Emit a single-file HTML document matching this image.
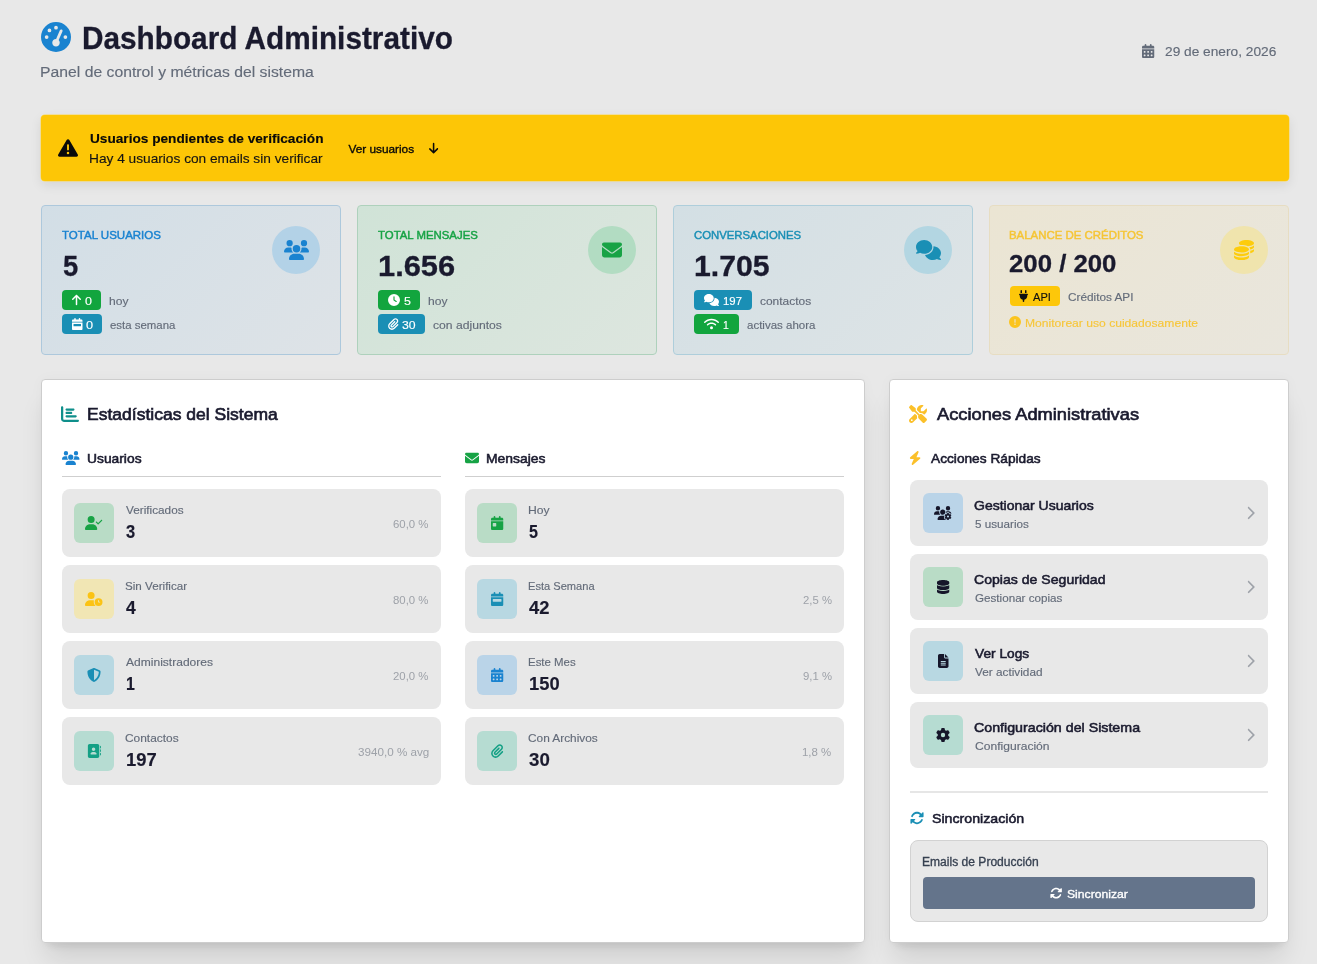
<!DOCTYPE html>
<html lang="es">
<head>
<meta charset="utf-8">
<title>Dashboard Administrativo</title>
<style>
html,body{margin:0;padding:0}
body{width:1317px;height:964px;overflow:hidden;background:#e8e8e8;font-family:"Liberation Sans", Arial, sans-serif;position:relative}
main,header,section,article,aside{display:block;margin:0;padding:0}
main div{position:absolute;box-sizing:border-box}
.t{position:absolute;display:block;white-space:nowrap;line-height:1;margin:0;padding:0;font-weight:400;font-style:normal;text-decoration:none;transform-origin:left top}
svg{position:absolute;overflow:visible}
main div.tx{left:0;top:0;width:1317px;height:964px;will-change:transform}
</style>
</head>
<body>
<main>
<header class="page-header">
<svg style="left:40.80px;top:21.60px" width="30.00" height="30.00" viewBox="0 0 512 512"><path fill="#1a83d0" fill-rule="evenodd" d="M0 256a256 256 0 1 1 512 0A256 256 0 1 1 0 256zM288 96a32 32 0 1 0 -64 0 32 32 0 1 0 64 0zM256 416c35.300 0 64-28.700 64-64c0-17.400-6.900-33.100-18.100-44.600L366 161.700c5.300-12.100-.2-26.300-12.300-31.600s-26.300 .2-31.600 12.300L257.900 288c-.6 0-1.300 0-1.900 0c-35.300 0-64 28.700-64 64s28.700 64 64 64zM176 144a32 32 0 1 0 -64 0 32 32 0 1 0 64 0zM96 288a32 32 0 1 0 0-64 32 32 0 1 0 0 64zm352-32a32 32 0 1 0 -64 0 32 32 0 1 0 64 0z"/></svg>
<svg style="left:1141.67px;top:44.00px" width="12.25" height="14.00" viewBox="0 0 448 512"><path fill="#636b79" fill-rule="evenodd" d="M128 0c17.700 0 32 14.300 32 32V64H288V32c0-17.700 14.300-32 32-32s32 14.300 32 32V64h48c26.500 0 48 21.500 48 48v48H0V112C0 85.500 21.500 64 48 64H96V32c0-17.700 14.300-32 32-32zM0 192H448V464c0 26.500-21.500 48-48 48H48c-26.500 0-48-21.500-48-48V192zm64 80v32c0 8.800 7.200 16 16 16h32c8.800 0 16-7.200 16-16V272c0-8.800-7.200-16-16-16H80c-8.800 0-16 7.200-16 16zm128 0v32c0 8.800 7.200 16 16 16h32c8.800 0 16-7.200 16-16V272c0-8.800-7.200-16-16-16H208c-8.800 0-16 7.200-16 16zm144-16c-8.800 0-16 7.200-16 16v32c0 8.800 7.200 16 16 16h32c8.800 0 16-7.200 16-16V272c0-8.800-7.200-16-16-16H336zM64 400v32c0 8.800 7.200 16 16 16h32c8.800 0 16-7.200 16-16V400c0-8.800-7.200-16-16-16H80c-8.800 0-16 7.200-16 16zm144-16c-8.800 0-16 7.200-16 16v32c0 8.800 7.200 16 16 16h32c8.800 0 16-7.200 16-16V400c0-8.800-7.200-16-16-16H208zm112 16v32c0 8.800 7.200 16 16 16h32c8.800 0 16-7.200 16-16V400c0-8.800-7.200-16-16-16H336c-8.800 0-16 7.200-16 16z"/></svg>
<div class="tx">
<h1 class="t" style="left:82.35px;top:23px;color:#1a1a2e;font-size:30.5px;font-weight:700;-webkit-text-stroke:0.3px;transform:scaleX(0.9755);">Dashboard Administrativo</h1>
<p class="t" style="left:40.10px;top:64px;color:#636b79;font-size:15.2px;-webkit-text-stroke:0.15px;transform:scaleX(1.0365);">Panel de control y métricas del sistema</p>
<time class="t" style="left:1165.49px;top:45px;color:#636b79;font-size:13.51px;-webkit-text-stroke:0.15px;transform:scaleX(1.0157);">29 de enero, 2026</time>
</div>
</header>
<section class="alert-warning">
<div style="left:41px;top:115px;width:1248px;height:66px;background:#fdc606;border-radius:4px;box-shadow:0 0 0 .5px #fbd95a,0 4px 12px rgba(0,0,0,.09)"></div>
<svg style="left:57.75px;top:137.50px" width="20.00" height="20.00" viewBox="0 0 512 512"><path fill="#0a0a0a" fill-rule="evenodd" d="M256 32c14.200 0 27.300 7.500 34.500 19.800l216 368c7.300 12.400 7.300 27.700 .2 40.100S486.300 480 472 480H40c-14.300 0-27.600-7.700-34.700-20.100s-7-27.800 .2-40.100l216-368C228.700 39.500 241.800 32 256 32zm0 128c-13.300 0-24 10.700-24 24V296c0 13.300 10.700 24 24 24s24-10.700 24-24V184c0-13.300-10.700-24-24-24zm32 224a32 32 0 1 0 -64 0 32 32 0 1 0 64 0z"/></svg>
<svg style="left:428.51px;top:141.53px" width="9.19" height="12.25" viewBox="0 0 384 512"><path fill="#0a0a0a" fill-rule="evenodd" d="M169.400 470.600c12.500 12.500 32.800 12.500 45.300 0l160-160c12.500-12.500 12.500-32.800 0-45.300s-32.800-12.500-45.300 0L224 370.800V64c0-17.700-14.300-32-32-32s-32 14.300-32 32V370.800L54.600 265.400c-12.500-12.500-32.800-12.500-45.300 0s-12.500 32.800 0 45.300l160 160z"/></svg>
<div class="tx">
<strong class="t" style="left:89.54px;top:132px;color:#0a0a0a;font-size:13.51px;font-weight:700;-webkit-text-stroke:0.15px;transform:scaleX(1.0105);">Usuarios pendientes de verificación</strong>
<span class="t" style="left:89.29px;top:152px;color:#151515;font-size:13.51px;-webkit-text-stroke:0.15px;transform:scaleX(1.0142);">Hay 4 usuarios con emails sin verificar</span>
<a class="t" style="left:348.45px;top:144px;color:#0a0a0a;font-size:11.82px;-webkit-text-stroke:0.35px;">Ver usuarios</a>
</div>
</section>
<article class="stat-card users">
<div style="left:41px;top:205px;width:300px;height:150px;background:linear-gradient(135deg,#d2dee6,#dee3e7);border:1px solid #adc8dc;border-radius:4px"></div>
<div style="left:272px;top:226px;width:48px;height:48px;background:#b3d2e7;border-radius:50%"></div>
<div style="left:61.9px;top:290px;width:39.1px;height:20px;background:#12a53e;border-radius:4px"></div>
<div style="left:61.9px;top:314px;width:40.0px;height:20px;background:#1a8fb5;border-radius:4px"></div>
<svg style="left:283.50px;top:240.00px" width="25.00" height="20.00" viewBox="0 0 640 512"><path fill="#1a83d0" fill-rule="evenodd" d="M144 0a80 80 0 1 1 0 160A80 80 0 1 1 144 0zM512 0a80 80 0 1 1 0 160A80 80 0 1 1 512 0zM0 298.700C0 239.800 47.800 192 106.700 192h42.700c15.900 0 31 3.500 44.600 9.700c-1.300 7.200-1.900 14.700-1.900 22.300c0 38.200 16.800 72.500 43.300 96c-.2 0-.4 0-.7 0H21.300C9.600 320 0 310.400 0 298.700zM405.300 320c-.2 0-.4 0-.7 0c26.600-23.500 43.300-57.800 43.300-96c0-7.600-.7-15-1.900-22.300c13.600-6.300 28.700-9.700 44.600-9.700h42.700C592.200 192 640 239.800 640 298.700c0 11.800-9.600 21.300-21.300 21.300H405.300zM224 224a96 96 0 1 1 192 0 96 96 0 1 1 -192 0zM128 485.300C128 411.700 187.700 352 261.300 352H378.700C452.300 352 512 411.700 512 485.300c0 14.700-11.900 26.700-26.700 26.700H154.700c-14.700 0-26.700-11.900-26.700-26.700z"/></svg>
<svg style="left:71.50px;top:293.60px" width="9.00" height="12.00" viewBox="0 0 384 512"><path fill="#ffffff" fill-rule="evenodd" d="M214.600 41.400c-12.500-12.500-32.800-12.500-45.300 0l-160 160c-12.500 12.500-12.500 32.800 0 45.300s32.800 12.500 45.300 0L160 141.200V448c0 17.700 14.300 32 32 32s32-14.300 32-32V141.200L329.400 246.600c12.500 12.500 32.800 12.500 45.300 0s12.500-32.800 0-45.300l-160-160z"/></svg>
<svg style="left:71.50px;top:317.60px" width="10.50" height="12.00" viewBox="0 0 448 512"><path fill="#ffffff" fill-rule="evenodd" d="M128 0c17.700 0 32 14.300 32 32V64H288V32c0-17.700 14.300-32 32-32s32 14.300 32 32V64h48c26.500 0 48 21.500 48 48v48H0V112C0 85.500 21.500 64 48 64H96V32c0-17.700 14.300-32 32-32zM0 192H448V464c0 26.500-21.500 48-48 48H48c-26.500 0-48-21.500-48-48V192zm80 64c-8.800 0-16 7.200-16 16v64c0 8.800 7.200 16 16 16H368c8.800 0 16-7.200 16-16V272c0-8.800-7.200-16-16-16H80z"/></svg>
<div class="tx">
<span class="t" style="left:62.10px;top:230px;color:#1a83d0;font-size:11.58px;-webkit-text-stroke:0.45px;transform:scaleX(0.9945);">TOTAL USUARIOS</span>
<strong class="t" style="left:62.50px;top:251px;color:#1a1a2e;font-size:29.3px;font-weight:700;-webkit-text-stroke:0.3px;transform:scaleX(0.9333);">5</strong>
<span class="t" style="left:84.73px;top:296px;color:#ffffff;font-size:11.58px;-webkit-text-stroke:0.15px;transform:scaleX(1.0783);">0</span>
<span class="t" style="left:109.02px;top:296px;color:#636b79;font-size:11.58px;-webkit-text-stroke:0.15px;transform:scaleX(1.0444);">hoy</span>
<span class="t" style="left:85.83px;top:320px;color:#ffffff;font-size:11.58px;-webkit-text-stroke:0.15px;transform:scaleX(1.0957);">0</span>
<span class="t" style="left:110.21px;top:320px;color:#636b79;font-size:11.58px;-webkit-text-stroke:0.15px;transform:scaleX(0.9864);">esta semana</span>
</div>
</article>
<article class="stat-card messages">
<div style="left:357px;top:205px;width:300px;height:150px;background:linear-gradient(135deg,#d0e3d7,#dde6df);border:1px solid #aed1bc;border-radius:4px"></div>
<div style="left:588px;top:226px;width:48px;height:48px;background:#b2dcc2;border-radius:50%"></div>
<div style="left:377.9px;top:290px;width:42.0px;height:20px;background:#12a53e;border-radius:4px"></div>
<div style="left:377.9px;top:314px;width:46.9px;height:20px;background:#1a8fb5;border-radius:4px"></div>
<svg style="left:602.00px;top:240.00px" width="20.00" height="20.00" viewBox="0 0 512 512"><path fill="#17a345" fill-rule="evenodd" d="M48 64C21.500 64 0 85.500 0 112c0 15.100 7.100 29.300 19.200 38.400L236.800 313.600c11.400 8.500 27 8.500 38.400 0L492.800 150.400c12.100-9.100 19.200-23.300 19.200-38.400c0-26.500-21.500-48-48-48H48zM0 176V384c0 35.300 28.700 64 64 64H448c35.300 0 64-28.700 64-64V176L294.400 339.200c-22.800 17.100-54 17.100-76.800 0L0 176z"/></svg>
<svg style="left:387.50px;top:293.60px" width="12.00" height="12.00" viewBox="0 0 512 512"><path fill="#ffffff" fill-rule="evenodd" d="M256 0a256 256 0 1 1 0 512A256 256 0 1 1 256 0zM232 120V256c0 8 4 15.500 10.700 20l96 64c11 7.400 25.900 4.400 33.300-6.700s4.400-25.900-6.700-33.300L280 243.200V120c0-13.300-10.700-24-24-24s-24 10.700-24 24z"/></svg>
<svg style="left:387.50px;top:317.60px" width="10.50" height="12.00" viewBox="0 0 448 512"><path fill="#ffffff" fill-rule="evenodd" d="M364.200 83.800c-24.400-24.400-64-24.400-88.400 0l-184 184c-42.100 42.100-42.100 110.300 0 152.400s110.300 42.100 152.400 0l152-152c10.900-10.900 28.700-10.900 39.600 0s10.900 28.700 0 39.600l-152 152c-64 64-167.600 64-231.600 0s-64-167.600 0-231.600l184-184c46.300-46.300 121.300-46.300 167.600 0s46.300 121.300 0 167.600l-176 176c-28.600 28.600-75 28.600-103.600 0s-28.600-75 0-103.600l144-144c10.900-10.900 28.700-10.900 39.600 0s10.900 28.700 0 39.600l-144 144c-6.700 6.700-6.700 17.700 0 24.400s17.700 6.700 24.400 0l176-176c24.400-24.400 24.400-64 0-88.400z"/></svg>
<div class="tx">
<span class="t" style="left:378.10px;top:230px;color:#17a345;font-size:11.58px;-webkit-text-stroke:0.45px;transform:scaleX(0.9847);">TOTAL MENSAJES</span>
<strong class="t" style="left:378.16px;top:251px;color:#1a1a2e;font-size:29.3px;font-weight:700;-webkit-text-stroke:0.3px;transform:scaleX(1.0516);">1.656</strong>
<span class="t" style="left:403.56px;top:296px;color:#ffffff;font-size:11.58px;-webkit-text-stroke:0.15px;transform:scaleX(1.0727);">5</span>
<span class="t" style="left:427.72px;top:296px;color:#636b79;font-size:11.58px;-webkit-text-stroke:0.15px;transform:scaleX(1.0444);">hoy</span>
<span class="t" style="left:401.77px;top:320px;color:#ffffff;font-size:11.58px;-webkit-text-stroke:0.15px;transform:scaleX(1.0583);">30</span>
<span class="t" style="left:432.68px;top:320px;color:#636b79;font-size:11.58px;-webkit-text-stroke:0.15px;transform:scaleX(1.0486);">con adjuntos</span>
</div>
</article>
<article class="stat-card conversations">
<div style="left:673px;top:205px;width:300px;height:150px;background:linear-gradient(135deg,#d3dfe4,#dee4e6);border:1px solid #aecedb;border-radius:4px"></div>
<div style="left:904px;top:226px;width:48px;height:48px;background:#b3d6e2;border-radius:50%"></div>
<div style="left:693.9px;top:290px;width:58.1px;height:20px;background:#1a8fb5;border-radius:4px"></div>
<div style="left:693.9px;top:314px;width:45.2px;height:20px;background:#12a53e;border-radius:4px"></div>
<svg style="left:915.50px;top:240.00px" width="25.00" height="20.00" viewBox="0 0 640 512"><path fill="#1a8fb5" fill-rule="evenodd" d="M208 352c114.900 0 208-78.800 208-176S322.900 0 208 0S0 78.800 0 176c0 38.600 14.700 74.300 39.600 103.400c-3.500 9.400-8.700 17.700-14.200 24.700c-4.800 6.200-9.700 11-13.300 14.300c-1.800 1.600-3.300 2.900-4.300 3.700c-.5 .4-.9 .7-1.100 .8l-.2 .2 0 0 0 0C1 327.200-1.400 334.400 .8 340.900S9.100 352 16 352c21.800 0 43.800-5.600 62.100-12.500c9.200-3.500 17.800-7.400 25.300-11.400C134.100 343.300 169.800 352 208 352zM448 176c0 112.300-99.100 196.900-216.500 207C255.800 457.400 336.400 512 432 512c38.200 0 73.900-8.700 104.700-23.900c7.500 4 16 7.900 25.200 11.400c18.300 6.900 40.300 12.500 62.100 12.500c6.900 0 13.100-4.500 15.200-11.100c2.100-6.600-.2-13.800-5.800-17.900l0 0 0 0-.2-.2c-.2-.2-.6-.4-1.100-.8c-1-.8-2.500-2-4.300-3.700c-3.600-3.300-8.500-8.100-13.300-14.300c-5.500-7-10.700-15.400-14.200-24.700c24.900-29 39.600-64.700 39.600-103.400c0-92.800-84.900-168.900-192.600-175.500c.4 5.100 .6 10.300 .6 15.500z"/></svg>
<svg style="left:703.50px;top:293.60px" width="15.00" height="12.00" viewBox="0 0 640 512"><path fill="#ffffff" fill-rule="evenodd" d="M208 352c114.900 0 208-78.800 208-176S322.900 0 208 0S0 78.800 0 176c0 38.600 14.700 74.300 39.600 103.400c-3.500 9.400-8.700 17.700-14.200 24.700c-4.800 6.200-9.700 11-13.300 14.300c-1.800 1.600-3.300 2.900-4.300 3.700c-.5 .4-.9 .7-1.100 .8l-.2 .2 0 0 0 0C1 327.200-1.400 334.400 .8 340.900S9.100 352 16 352c21.800 0 43.800-5.600 62.100-12.500c9.200-3.500 17.800-7.400 25.300-11.400C134.100 343.300 169.800 352 208 352zM448 176c0 112.300-99.100 196.900-216.500 207C255.800 457.400 336.400 512 432 512c38.200 0 73.900-8.700 104.700-23.900c7.500 4 16 7.900 25.200 11.400c18.300 6.900 40.300 12.500 62.100 12.500c6.900 0 13.100-4.500 15.200-11.100c2.100-6.600-.2-13.800-5.800-17.900l0 0 0 0-.2-.2c-.2-.2-.6-.4-1.100-.8c-1-.8-2.500-2-4.300-3.700c-3.600-3.300-8.500-8.100-13.300-14.300c-5.500-7-10.700-15.400-14.200-24.700c24.900-29 39.600-64.700 39.600-103.400c0-92.800-84.900-168.900-192.600-175.500c.4 5.100 .6 10.300 .6 15.500z"/></svg>
<svg style="left:703.50px;top:317.60px" width="15.00" height="12.00" viewBox="0 0 640 512"><path fill="#ffffff" fill-rule="evenodd" d="M54.200 202.900C123.200 136.700 216.800 96 320 96s196.800 40.700 265.800 106.900c12.800 12.200 33 11.800 45.200-.9s11.800-33-.9-45.200C549.700 79.500 440.400 32 320 32S90.300 79.500 9.800 156.700C-2.900 169-3.300 189.200 8.900 202s32.500 13.200 45.200 .9zM320 256c56.800 0 108.600 21.100 148.200 56c13.300 11.700 33.500 10.400 45.200-2.800s10.400-33.500-2.800-45.200C459.800 219.200 393 192 320 192s-139.800 27.200-190.500 72c-13.300 11.700-14.500 31.900-2.800 45.200s31.900 14.500 45.200 2.800c39.500-34.900 91.300-56 148.200-56zm64 160a64 64 0 1 0 -128 0 64 64 0 1 0 128 0z"/></svg>
<div class="tx">
<span class="t" style="left:693.86px;top:230px;color:#1a8fb5;font-size:11.58px;-webkit-text-stroke:0.45px;transform:scaleX(0.9793);">CONVERSACIONES</span>
<strong class="t" style="left:694.20px;top:251px;color:#1a1a2e;font-size:29.3px;font-weight:700;-webkit-text-stroke:0.3px;transform:scaleX(1.0310);">1.705</strong>
<span class="t" style="left:722.96px;top:296px;color:#ffffff;font-size:11.58px;-webkit-text-stroke:0.15px;transform:scaleX(0.9833);">197</span>
<span class="t" style="left:760.08px;top:296px;color:#636b79;font-size:11.58px;-webkit-text-stroke:0.15px;transform:scaleX(1.0318);">contactos</span>
<span class="t" style="left:723.06px;top:320px;color:#ffffff;font-size:11.58px;-webkit-text-stroke:0.15px;transform:scaleX(0.9000);">1</span>
<span class="t" style="left:746.90px;top:320px;color:#636b79;font-size:11.58px;-webkit-text-stroke:0.15px;transform:scaleX(0.9942);">activas ahora</span>
</div>
</article>
<article class="stat-card credits">
<div style="left:989px;top:205px;width:300px;height:150px;background:linear-gradient(135deg,#ebe5d3,#e9e6dd);border:1px solid #e7ddc2;border-radius:4px"></div>
<div style="left:1220px;top:226px;width:48px;height:48px;background:#f0e4ad;border-radius:50%"></div>
<div style="left:1009.8px;top:286px;width:50.2px;height:20px;background:#fdc70a;border-radius:4px"></div>
<svg style="left:1234.00px;top:240.00px" width="20.00" height="20.00" viewBox="0 0 512 512"><path fill="#fdcc0d" fill-rule="evenodd" d="M512 80c0 18-14.300 34.600-38.400 48c-29.100 16.100-72.500 27.500-122.300 30.900c-3.700-1.800-7.400-3.500-11.300-5C300.600 137.400 248.200 128 192 128c-8.300 0-16.400 .2-24.500 .6l-1.100-.6C142.300 114.600 128 98 128 80c0-44.200 86-80 192-80S512 35.800 512 80zM160.700 161.100c10.200-.7 20.700-1.100 31.300-1.100c62.200 0 117.400 12.300 152.500 31.400C369.300 204.900 384 221.700 384 240c0 4-.7 7.900-2.100 11.700c-4.600 13.200-17 25.300-35 35.500c0 0 0 0 0 0c-.1 .1-.3 .1-.4 .2l0 0 0 0c-.3 .2-.6 .3-.9 .5c-35 19.400-90.800 32-153.600 32c-59.600 0-112.900-11.300-148.200-29.100c-1.900-.9-3.700-1.900-5.500-2.900C14.300 274.600 0 258 0 240c0-34.800 53.400-64.500 128-75.400c10.500-1.500 21.400-2.700 32.700-3.500zM416 240c0-21.900-10.600-39.900-24.100-53.400c28.300-4.400 54.200-11.400 76.200-20.500c16.300-6.800 31.500-15.200 43.900-25.500V176c0 19.300-16.500 37.100-43.800 50.900c-14.600 7.400-32.400 13.700-52.400 18.500c.1-1.800 .2-3.500 .2-5.300zm-32 96c0 18-14.300 34.600-38.400 48c-1.800 1-3.600 1.900-5.500 2.900C304.900 404.700 251.600 416 192 416c-62.800 0-118.600-12.600-153.600-32C14.300 370.600 0 354 0 336V300.600c12.500 10.300 27.600 18.700 43.900 25.500C83.400 342.600 135.800 352 192 352s108.600-9.400 148.100-25.900c7.800-3.200 15.300-6.900 22.400-10.900c6.100-3.400 11.800-7.200 17.200-11.200c1.500-1.100 2.900-2.300 4.300-3.400V304v5.700V336zm32 0V304 278.100c19-4.200 36.500-9.500 52.100-16c16.300-6.800 31.500-15.200 43.900-25.500V272c0 10.500-5 21-14.900 30.900c-16.300 16.300-45 29.700-81.300 38.400c.1-1.700 .2-3.500 .2-5.300zM192 448c56.200 0 108.600-9.400 148.100-25.900c16.300-6.800 31.500-15.200 43.900-25.500V432c0 44.200-86 80-192 80S0 476.200 0 432V396.600c12.500 10.300 27.600 18.700 43.900 25.500C83.400 438.600 135.800 448 192 448z"/></svg>
<svg style="left:1019.40px;top:289.60px" width="9.00" height="12.00" viewBox="0 0 384 512"><path fill="#111111" fill-rule="evenodd" d="M96 0C78.300 0 64 14.300 64 32v96h64V32c0-17.700-14.300-32-32-32zM288 0c-17.700 0-32 14.300-32 32v96h64V32c0-17.700-14.300-32-32-32zM32 160c-17.700 0-32 14.300-32 32s14.300 32 32 32v32c0 77.400 55 142 128 156.800V480c0 17.700 14.300 32 32 32s32-14.300 32-32V412.800C297 398 352 333.400 352 256V224c17.700 0 32-14.300 32-32s-14.300-32-32-32H32z"/></svg>
<svg style="left:1009.15px;top:316.25px" width="12.00" height="12.00" viewBox="0 0 512 512"><path fill="#fbc41d" fill-rule="evenodd" d="M256 512A256 256 0 1 0 256 0a256 256 0 1 0 0 512zm0-384c13.300 0 24 10.700 24 24V264c0 13.300-10.700 24-24 24s-24-10.700-24-24V152c0-13.300 10.700-24 24-24zM224 352a32 32 0 1 1 64 0 32 32 0 1 1 -64 0z"/></svg>
<div class="tx">
<span class="t" style="left:1009.06px;top:230px;color:#f5c535;font-size:11.58px;-webkit-text-stroke:0.45px;transform:scaleX(0.9871);">BALANCE DE CRÉDITOS</span>
<strong class="t" style="left:1009.39px;top:252px;color:#1a1a2e;font-size:23.8px;font-weight:700;-webkit-text-stroke:0.3px;transform:scaleX(1.0824);">200 / 200</strong>
<span class="t" style="left:1033.20px;top:292px;color:#111111;font-size:11.58px;-webkit-text-stroke:0.15px;transform:scaleX(0.9577);">API</span>
<span class="t" style="left:1068.19px;top:292px;color:#636b79;font-size:11.58px;-webkit-text-stroke:0.15px;transform:scaleX(1.0175);">Créditos API</span>
<span class="t" style="left:1024.82px;top:318px;color:#f6c63a;font-size:11.58px;-webkit-text-stroke:0.15px;transform:scaleX(1.0460);">Monitorear uso cuidadosamente</span>
</div>
</article>
<section class="panel system-stats">
<div style="left:41px;top:379px;width:824px;height:564px;background:#fff;border:1px solid #cdcdcd;border-radius:4px;box-shadow:0 20px 25px -5px rgba(0,0,0,.11),0 8px 10px -6px rgba(0,0,0,.10),0 0 14px rgba(0,0,0,.03)"></div>
<div style="left:62px;top:476px;width:379px;height:1px;background:#cfcfcf"></div>
<div style="left:465px;top:476px;width:379px;height:1px;background:#cfcfcf"></div>
<div style="left:62px;top:489px;width:379px;height:68px;background:#e8e8e8;border-radius:8px"></div>
<div style="left:74px;top:503px;width:40px;height:40px;background:#b9dcc6;border-radius:6px"></div>
<div style="left:62px;top:565px;width:379px;height:68px;background:#e8e8e8;border-radius:8px"></div>
<div style="left:74px;top:579px;width:40px;height:40px;background:#f1e6b4;border-radius:6px"></div>
<div style="left:62px;top:641px;width:379px;height:68px;background:#e8e8e8;border-radius:8px"></div>
<div style="left:74px;top:655px;width:40px;height:40px;background:#b8d8e2;border-radius:6px"></div>
<div style="left:62px;top:717px;width:379px;height:68px;background:#e8e8e8;border-radius:8px"></div>
<div style="left:74px;top:731px;width:40px;height:40px;background:#b6dcd2;border-radius:6px"></div>
<div style="left:465px;top:489px;width:379px;height:68px;background:#e8e8e8;border-radius:8px"></div>
<div style="left:477px;top:503px;width:40px;height:40px;background:#b9dcc6;border-radius:6px"></div>
<div style="left:465px;top:565px;width:379px;height:68px;background:#e8e8e8;border-radius:8px"></div>
<div style="left:477px;top:579px;width:40px;height:40px;background:#b8d8e2;border-radius:6px"></div>
<div style="left:465px;top:641px;width:379px;height:68px;background:#e8e8e8;border-radius:8px"></div>
<div style="left:477px;top:655px;width:40px;height:40px;background:#bad4e8;border-radius:6px"></div>
<div style="left:465px;top:717px;width:379px;height:68px;background:#e8e8e8;border-radius:8px"></div>
<div style="left:477px;top:731px;width:40px;height:40px;background:#b6dcd2;border-radius:6px"></div>
<svg style="left:61.35px;top:404.95px" width="18.00" height="18.00" viewBox="0 0 512 512"><path fill="#0f8f8b" fill-rule="evenodd" d="M32 32c17.700 0 32 14.300 32 32V400c0 8.800 7.200 16 16 16H480c17.700 0 32 14.300 32 32s-14.300 32-32 32H80c-44.200 0-80-35.800-80-80V64C0 46.300 14.300 32 32 32zm96 96c0-17.700 14.300-32 32-32l192 0c17.700 0 32 14.300 32 32s-14.300 32-32 32l-192 0c-17.700 0-32-14.300-32-32zm32 64H288c17.700 0 32 14.300 32 32s-14.300 32-32 32H160c-17.700 0-32-14.300-32-32s14.300-32 32-32zm0 96H416c17.700 0 32 14.300 32 32s-14.300 32-32 32H160c-17.700 0-32-14.300-32-32s14.300-32 32-32z"/></svg>
<svg style="left:61.60px;top:450.90px" width="17.50" height="14.00" viewBox="0 0 640 512"><path fill="#1a83d0" fill-rule="evenodd" d="M144 0a80 80 0 1 1 0 160A80 80 0 1 1 144 0zM512 0a80 80 0 1 1 0 160A80 80 0 1 1 512 0zM0 298.700C0 239.800 47.800 192 106.700 192h42.700c15.900 0 31 3.500 44.600 9.700c-1.300 7.200-1.900 14.700-1.900 22.300c0 38.200 16.800 72.500 43.300 96c-.2 0-.4 0-.7 0H21.300C9.600 320 0 310.400 0 298.700zM405.300 320c-.2 0-.4 0-.7 0c26.600-23.500 43.300-57.800 43.300-96c0-7.600-.7-15-1.900-22.300c13.600-6.300 28.700-9.700 44.600-9.700h42.700C592.200 192 640 239.800 640 298.700c0 11.800-9.600 21.300-21.300 21.300H405.300zM224 224a96 96 0 1 1 192 0 96 96 0 1 1 -192 0zM128 485.300C128 411.700 187.700 352 261.300 352H378.700C452.300 352 512 411.700 512 485.300c0 14.700-11.900 26.700-26.700 26.700H154.700c-14.700 0-26.700-11.900-26.700-26.700z"/></svg>
<svg style="left:464.55px;top:451.05px" width="14.00" height="14.00" viewBox="0 0 512 512"><path fill="#17a345" fill-rule="evenodd" d="M48 64C21.500 64 0 85.500 0 112c0 15.100 7.100 29.300 19.200 38.400L236.800 313.600c11.400 8.500 27 8.500 38.400 0L492.800 150.400c12.100-9.100 19.200-23.300 19.200-38.400c0-26.500-21.500-48-48-48H48zM0 176V384c0 35.300 28.700 64 64 64H448c35.300 0 64-28.700 64-64V176L294.400 339.200c-22.800 17.100-54 17.100-76.800 0L0 176z"/></svg>
<svg style="left:85.25px;top:516.00px" width="17.50" height="14.00" viewBox="0 0 640 512"><path fill="#17a345" fill-rule="evenodd" d="M96 128a128 128 0 1 1 256 0A128 128 0 1 1 96 128zM0 482.300C0 383.800 79.800 304 178.300 304h91.400C368.200 304 448 383.800 448 482.300c0 16.400-13.300 29.700-29.700 29.700H29.700C13.300 512 0 498.700 0 482.300zM625 177L497 305c-9.400 9.400-24.600 9.400-33.900 0l-64-64c-9.400-9.400-9.400-24.600 0-33.900s24.600-9.400 33.900 0l47 47L591 143c9.400-9.400 24.600-9.400 33.900 0s9.400 24.600 0 33.900z"/></svg>
<svg style="left:85.25px;top:592.00px" width="17.50" height="14.00" viewBox="0 0 640 512"><path fill="#fbc314" fill-rule="evenodd" d="M224 0a128 128 0 1 1 0 256A128 128 0 1 1 224 0zM178.300 304h91.400c20.600 0 40.400 3.500 58.800 9.900C323 331 320 349.100 320 368c0 59.500 29.500 112.100 74.800 144H29.700C13.300 512 0 498.700 0 482.300C0 383.800 79.800 304 178.300 304zM352 368a144 144 0 1 1 288 0 144 144 0 1 1 -288 0zm144-80c-8.800 0-16 7.200-16 16v64c0 8.800 7.200 16 16 16h48c8.800 0 16-7.200 16-16s-7.200-16-16-16H512V304c0-8.800-7.200-16-16-16z"/></svg>
<svg style="left:87.00px;top:668.00px" width="14.00" height="14.00" viewBox="0 0 512 512"><path fill="#1a8fb5" fill-rule="evenodd" d="M256 0c4.600 0 9.200 1 13.400 2.900L457.700 82.800c22 9.300 38.400 31 38.300 57.200c-.5 99.200-41.300 280.700-213.600 363.200c-16.700 8-36.100 8-52.800 0C57.300 420.700 16.500 239.200 16 140c-.1-26.200 16.300-47.900 38.300-57.200L242.700 2.900C246.800 1 251.400 0 256 0zm0 66.800V444.800C394 378 431.100 230.100 432 141.400L256 66.800l0 0z"/></svg>
<svg style="left:87.00px;top:744.00px" width="14.00" height="14.00" viewBox="0 0 512 512"><path fill="#14a085" fill-rule="evenodd" d="M96 0C60.700 0 32 28.700 32 64V448c0 35.300 28.700 64 64 64H384c35.300 0 64-28.700 64-64V64c0-35.300-28.700-64-64-64H96zM208 288h64c44.200 0 80 35.800 80 80c0 8.800-7.200 16-16 16H144c-8.800 0-16-7.200-16-16c0-44.200 35.800-80 80-80zm-32-96a64 64 0 1 1 128 0 64 64 0 1 1 -128 0zM512 80c0-8.800-7.200-16-16-16s-16 7.200-16 16v64c0 8.800 7.200 16 16 16s16-7.200 16-16V80zM496 192c-8.800 0-16 7.200-16 16v64c0 8.800 7.200 16 16 16s16-7.200 16-16V208c0-8.800-7.200-16-16-16zm16 144c0-8.800-7.200-16-16-16s-16 7.200-16 16v64c0 8.800 7.200 16 16 16s16-7.200 16-16V336z"/></svg>
<svg style="left:490.88px;top:516.00px" width="12.25" height="14.00" viewBox="0 0 448 512"><path fill="#17a345" fill-rule="evenodd" d="M128 0c17.700 0 32 14.300 32 32V64H288V32c0-17.700 14.300-32 32-32s32 14.300 32 32V64h48c26.500 0 48 21.500 48 48v48H0V112C0 85.500 21.500 64 48 64H96V32c0-17.700 14.300-32 32-32zM0 192H448V464c0 26.500-21.500 48-48 48H48c-26.500 0-48-21.500-48-48V192zm80 64c-8.800 0-16 7.200-16 16v96c0 8.800 7.200 16 16 16h96c8.800 0 16-7.200 16-16V272c0-8.800-7.200-16-16-16H80z"/></svg>
<svg style="left:490.88px;top:592.00px" width="12.25" height="14.00" viewBox="0 0 448 512"><path fill="#1a8fb5" fill-rule="evenodd" d="M128 0c17.700 0 32 14.300 32 32V64H288V32c0-17.700 14.300-32 32-32s32 14.300 32 32V64h48c26.500 0 48 21.500 48 48v48H0V112C0 85.500 21.500 64 48 64H96V32c0-17.700 14.300-32 32-32zM0 192H448V464c0 26.500-21.500 48-48 48H48c-26.500 0-48-21.500-48-48V192zm80 64c-8.800 0-16 7.200-16 16v64c0 8.800 7.200 16 16 16H368c8.800 0 16-7.200 16-16V272c0-8.800-7.200-16-16-16H80z"/></svg>
<svg style="left:490.88px;top:668.00px" width="12.25" height="14.00" viewBox="0 0 448 512"><path fill="#1a83d0" fill-rule="evenodd" d="M128 0c17.700 0 32 14.300 32 32V64H288V32c0-17.700 14.300-32 32-32s32 14.300 32 32V64h48c26.500 0 48 21.500 48 48v48H0V112C0 85.500 21.500 64 48 64H96V32c0-17.700 14.300-32 32-32zM0 192H448V464c0 26.500-21.500 48-48 48H48c-26.500 0-48-21.500-48-48V192zm64 80v32c0 8.800 7.200 16 16 16h32c8.800 0 16-7.200 16-16V272c0-8.800-7.200-16-16-16H80c-8.800 0-16 7.200-16 16zm128 0v32c0 8.800 7.200 16 16 16h32c8.800 0 16-7.200 16-16V272c0-8.800-7.200-16-16-16H208c-8.800 0-16 7.200-16 16zm144-16c-8.800 0-16 7.200-16 16v32c0 8.800 7.200 16 16 16h32c8.800 0 16-7.200 16-16V272c0-8.800-7.200-16-16-16H336zM64 400v32c0 8.800 7.200 16 16 16h32c8.800 0 16-7.200 16-16V400c0-8.800-7.200-16-16-16H80c-8.800 0-16 7.200-16 16zm144-16c-8.800 0-16 7.200-16 16v32c0 8.800 7.200 16 16 16h32c8.800 0 16-7.200 16-16V400c0-8.800-7.200-16-16-16H208zm112 16v32c0 8.800 7.200 16 16 16h32c8.800 0 16-7.200 16-16V400c0-8.800-7.200-16-16-16H336c-8.800 0-16 7.200-16 16z"/></svg>
<svg style="left:490.88px;top:744.00px" width="12.25" height="14.00" viewBox="0 0 448 512"><path fill="#14a085" fill-rule="evenodd" d="M364.200 83.800c-24.400-24.400-64-24.400-88.400 0l-184 184c-42.100 42.100-42.100 110.300 0 152.400s110.300 42.100 152.400 0l152-152c10.900-10.900 28.700-10.900 39.600 0s10.900 28.700 0 39.600l-152 152c-64 64-167.600 64-231.600 0s-64-167.600 0-231.600l184-184c46.300-46.300 121.300-46.300 167.600 0s46.300 121.300 0 167.600l-176 176c-28.600 28.600-75 28.600-103.600 0s-28.600-75 0-103.600l144-144c10.900-10.900 28.700-10.900 39.600 0s10.900 28.700 0 39.600l-144 144c-6.700 6.700-6.700 17.700 0 24.400s17.700 6.700 24.400 0l176-176c24.400-24.400 24.400-64 0-88.400z"/></svg>
<div class="tx">
<h2 class="t" style="left:87.27px;top:406px;color:#1a1a2e;font-size:16.98px;-webkit-text-stroke:0.65px;transform:scaleX(1.0318);">Estadísticas del Sistema</h2>
<h3 class="t" style="left:86.93px;top:452px;color:#1a1a2e;font-size:13.51px;-webkit-text-stroke:0.55px;transform:scaleX(1.0239);">Usuarios</h3>
<h3 class="t" style="left:486.33px;top:452px;color:#1a1a2e;font-size:13.51px;-webkit-text-stroke:0.55px;transform:scaleX(1.0308);">Mensajes</h3>
<span class="t" style="left:125.80px;top:505px;color:#636b79;font-size:11.58px;-webkit-text-stroke:0.15px;transform:scaleX(1.0169);">Verificados</span>
<strong class="t" style="left:126.37px;top:524px;color:#1a1a2e;font-size:17.7px;font-weight:700;-webkit-text-stroke:0.15px;transform:scaleX(0.9333);">3</strong>
<span class="t" style="left:393.11px;top:519px;color:#9ea2a9;font-size:11.58px;-webkit-text-stroke:0.01px;transform:scaleX(0.9844);">60,0 %</span>
<span class="t" style="left:125.30px;top:581px;color:#636b79;font-size:11.58px;-webkit-text-stroke:0.15px;transform:scaleX(1.0057);">Sin Verificar</span>
<strong class="t" style="left:125.95px;top:600px;color:#1a1a2e;font-size:17.7px;font-weight:700;-webkit-text-stroke:0.15px;transform:scaleX(0.9895);">4</strong>
<span class="t" style="left:393.11px;top:595px;color:#9ea2a9;font-size:11.58px;-webkit-text-stroke:0.01px;transform:scaleX(0.9844);">80,0 %</span>
<span class="t" style="left:125.80px;top:657px;color:#636b79;font-size:11.58px;-webkit-text-stroke:0.15px;transform:scaleX(1.0402);">Administradores</span>
<strong class="t" style="left:125.68px;top:676px;color:#1a1a2e;font-size:17.7px;font-weight:700;-webkit-text-stroke:0.15px;transform:scaleX(0.9000);">1</strong>
<span class="t" style="left:393.21px;top:671px;color:#9ea2a9;font-size:11.58px;-webkit-text-stroke:0.01px;transform:scaleX(0.9816);">20,0 %</span>
<span class="t" style="left:125.29px;top:733px;color:#636b79;font-size:11.58px;-webkit-text-stroke:0.15px;transform:scaleX(1.0283);">Contactos</span>
<strong class="t" style="left:126.36px;top:752px;color:#1a1a2e;font-size:17.7px;font-weight:700;-webkit-text-stroke:0.15px;transform:scaleX(1.0414);">197</strong>
<span class="t" style="left:357.80px;top:747px;color:#9ea2a9;font-size:11.58px;-webkit-text-stroke:0.01px;transform:scaleX(1.0072);">3940,0 % avg</span>
<span class="t" style="left:528.01px;top:505px;color:#636b79;font-size:11.58px;-webkit-text-stroke:0.15px;transform:scaleX(1.0500);">Hoy</span>
<strong class="t" style="left:529.14px;top:524px;color:#1a1a2e;font-size:17.7px;font-weight:700;-webkit-text-stroke:0.15px;transform:scaleX(0.9111);">5</strong>
<span class="t" style="left:528.08px;top:581px;color:#636b79;font-size:11.58px;-webkit-text-stroke:0.15px;transform:scaleX(0.9585);">Esta Semana</span>
<strong class="t" style="left:528.94px;top:600px;color:#1a1a2e;font-size:17.7px;font-weight:700;-webkit-text-stroke:0.15px;transform:scaleX(1.0400);">42</strong>
<span class="t" style="left:802.71px;top:595px;color:#9ea2a9;font-size:11.58px;-webkit-text-stroke:0.01px;transform:scaleX(0.9774);">2,5 %</span>
<span class="t" style="left:528.06px;top:657px;color:#636b79;font-size:11.58px;-webkit-text-stroke:0.15px;transform:scaleX(0.9884);">Este Mes</span>
<strong class="t" style="left:529.36px;top:676px;color:#1a1a2e;font-size:17.7px;font-weight:700;-webkit-text-stroke:0.15px;transform:scaleX(1.0357);">150</strong>
<span class="t" style="left:802.71px;top:671px;color:#9ea2a9;font-size:11.58px;-webkit-text-stroke:0.01px;transform:scaleX(0.9774);">9,1 %</span>
<span class="t" style="left:528.29px;top:733px;color:#636b79;font-size:11.58px;-webkit-text-stroke:0.15px;transform:scaleX(1.0222);">Con Archivos</span>
<strong class="t" style="left:529.34px;top:752px;color:#1a1a2e;font-size:17.7px;font-weight:700;-webkit-text-stroke:0.15px;transform:scaleX(1.0560);">30</strong>
<span class="t" style="left:802.41px;top:747px;color:#9ea2a9;font-size:11.58px;-webkit-text-stroke:0.01px;transform:scaleX(0.9876);">1,8 %</span>
</div>
</section>
<aside class="panel admin-actions">
<div style="left:889px;top:379px;width:400px;height:564px;background:#fff;border:1px solid #cdcdcd;border-radius:4px;box-shadow:0 20px 25px -5px rgba(0,0,0,.11),0 8px 10px -6px rgba(0,0,0,.10),0 0 14px rgba(0,0,0,.03)"></div>
<div style="left:910px;top:480px;width:358px;height:66px;background:#e8e8e8;border-radius:8px"></div>
<div style="left:923px;top:493px;width:40px;height:40px;background:#bad4e8;border-radius:6px"></div>
<div style="left:910px;top:554px;width:358px;height:66px;background:#e8e8e8;border-radius:8px"></div>
<div style="left:923px;top:567px;width:40px;height:40px;background:#b9dcc6;border-radius:6px"></div>
<div style="left:910px;top:628px;width:358px;height:66px;background:#e8e8e8;border-radius:8px"></div>
<div style="left:923px;top:641px;width:40px;height:40px;background:#b8d8e2;border-radius:6px"></div>
<div style="left:910px;top:702px;width:358px;height:66px;background:#e8e8e8;border-radius:8px"></div>
<div style="left:923px;top:715px;width:40px;height:40px;background:#b6dcd2;border-radius:6px"></div>
<div style="left:910px;top:791px;width:358px;height:2px;background:#e6e6e6"></div>
<div style="left:910px;top:840px;width:358px;height:82px;background:#e8e8e8;border:1px solid #d2d2d2;border-radius:8px"></div>
<div style="left:923px;top:877px;width:332px;height:32px;background:#64748b;border-radius:4px"></div>
<svg style="left:909.25px;top:405.25px" width="18.00" height="18.00" viewBox="0 0 512 512"><path fill="#fbc02a" fill-rule="evenodd" d="M78.600 5C69.100-2.400 55.600-1.500 47 7L7 47c-8.500 8.500-9.400 22-2.100 31.600l80 104c4.500 5.900 11.600 9.400 19 9.400h54.100l109 109c-14.700 29-10 65.400 14.300 89.600l112 112c12.500 12.500 32.800 12.500 45.300 0l64-64c12.500-12.500 12.500-32.800 0-45.300l-112-112c-24.200-24.200-60.600-29-89.600-14.300l-109-109V104c0-7.500-3.500-14.500-9.400-19L78.600 5zM19.900 396.100C7.200 408.800 0 426.100 0 444.100C0 481.600 30.400 512 67.900 512c18 0 35.300-7.200 48-19.900L233.700 374.300c-7.800-20.900-9-43.600-3.600-65.100l-61.700-61.700L19.900 396.100zM512 144c0-10.500-1.100-20.700-3.200-30.500c-2.400-11.200-16.100-14.100-24.200-6l-63.900 63.900c-3 3-7.100 4.700-11.300 4.700H352c-8.800 0-16-7.200-16-16V102.600c0-4.200 1.700-8.300 4.700-11.300l63.900-63.900c8.100-8.100 5.200-21.800-6-24.200C388.700 1.100 378.500 0 368 0C288.500 0 224 64.500 224 144l0 .8 85.300 85.300c36-9.100 75.800 .5 104 28.700L429 274.500c49-23 83-72.800 83-130.500zM56 432a24 24 0 1 1 48 0 24 24 0 1 1 -48 0z"/></svg>
<svg style="left:909.48px;top:450.90px" width="12.25" height="14.00" viewBox="0 0 448 512"><path fill="#fbc02a" fill-rule="evenodd" d="M349.400 44.600c5.900-13.700 1.500-29.700-10.600-38.500s-28.600-8-39.900 1.800l-256 224c-10 8.800-13.600 22.900-8.900 35.300S50.700 288 64 288H175.500L98.600 467.400c-5.900 13.700-1.500 29.700 10.600 38.500s28.600 8 39.900-1.800l256-224c10-8.800 13.600-22.900 8.900-35.300s-16.600-20.700-30-20.700H272.500L349.400 44.600z"/></svg>
<svg style="left:934.25px;top:506.00px" width="17.50" height="14.00" viewBox="0 0 640 512"><path fill="#16162a" fill-rule="evenodd" d="M144 160A80 80 0 1 0 144 0a80 80 0 1 0 0 160zm368 0A80 80 0 1 0 512 0a80 80 0 1 0 0 160zM0 298.700C0 310.400 9.600 320 21.300 320H234.700c.2 0 .4 0 .7 0c-26.600-23.500-43.300-57.800-43.300-96c0-7.600 .7-15 1.900-22.300c-13.600-6.300-28.700-9.700-44.600-9.700H106.700C47.800 192 0 239.800 0 298.700zM320 320c24 0 45.900-8.800 62.700-23.300c2.500-3.700 5.200-7.300 8-10.700c2.700-3.300 5.700-6.100 9-8.300C410 262.300 416 243.900 416 224c0-53-43-96-96-96s-96 43-96 96s43 96 96 96zm65.400 60.200c-10.300-5.900-18.100-16.200-20.800-28.200H261.300C187.700 352 128 411.700 128 485.300c0 14.700 11.900 26.700 26.700 26.700H455.200c-2.100-5.200-3.200-10.900-3.200-16.400v-3c-1.300-.7-2.700-1.500-4-2.300l-2.600 1.500c-16.800 9.700-40.500 8-54.700-9.700c-4.500-5.600-8.600-11.500-12.400-17.600l-.1-.2-.1-.2-2.400-4.100-.1-.2-.1-.2c-3.400-6.200-6.400-12.600-9-19.300c-8.200-21.200 2.200-42.600 19-52.300l2.700-1.500c0-.8 0-1.500 0-2.300s0-1.500 0-2.300l-2.700-1.500zM533.300 192H490.700c-15.900 0-31 3.500-44.600 9.700c1.300 7.200 1.900 14.700 1.900 22.300c0 17.400-3.500 33.900-9.700 49c2.500 .9 4.900 2 7.100 3.300l2.600 1.500c1.300-.8 2.600-1.600 4-2.300v-3c0-19.400 13.300-39.100 35.800-42.600c7.900-1.200 16-1.900 24.200-1.900s16.300 .6 24.200 1.900c22.500 3.500 35.800 23.200 35.800 42.600v3c1.300 .7 2.700 1.500 4 2.300l2.600-1.500c16.800-9.700 40.500-8 54.700 9.700c2.300 2.800 4.500 5.800 6.600 8.700c-2.100-57.100-49-102.700-106.600-102.700zm91.300 163.900c6.300-3.600 9.500-11.100 6.800-18c-2.100-5.500-4.600-10.800-7.400-15.900l-2.300-4c-3.100-5.100-6.500-9.900-10.200-14.500c-4.600-5.700-12.700-6.700-19-3l-2.900 1.700c-9.200 5.300-20.400 4-29.600-1.300s-16.100-14.500-16.100-25.100v-3.400c0-7.300-4.900-13.800-12.100-14.900c-6.500-1-13.100-1.500-19.900-1.500s-13.400 .5-19.900 1.500c-7.200 1.100-12.100 7.600-12.100 14.900v3.400c0 10.600-6.900 19.800-16.100 25.100s-20.400 6.600-29.600 1.300l-2.900-1.700c-6.300-3.600-14.400-2.600-19 3c-3.700 4.600-7.100 9.500-10.200 14.600l-2.300 3.900c-2.800 5.100-5.300 10.400-7.400 15.900c-2.600 6.800 .5 14.300 6.800 17.900l2.900 1.700c9.200 5.300 13.700 15.800 13.700 26.400s-4.500 21.100-13.700 26.400l-3 1.700c-6.300 3.600-9.500 11.100-6.800 17.900c2.100 5.500 4.600 10.700 7.400 15.800l2.400 4.100c3 5.100 6.400 9.900 10.100 14.500c4.600 5.700 12.700 6.700 19 3l2.900-1.700c9.200-5.300 20.400-4 29.600 1.300s16.100 14.500 16.100 25.100v3.400c0 7.300 4.900 13.800 12.100 14.900c6.500 1 13.100 1.500 19.900 1.500s13.400-.5 19.900-1.500c7.200-1.100 12.100-7.600 12.100-14.900v-3.400c0-10.600 6.900-19.800 16.100-25.100s20.400-6.600 29.600-1.300l2.900 1.700c6.300 3.600 14.400 2.600 19-3c3.700-4.600 7.100-9.400 10.100-14.500l2.400-4.200c2.800-5.100 5.300-10.300 7.400-15.800c2.600-6.800-.5-14.300-6.800-17.900l-3-1.700c-9.200-5.300-13.700-15.800-13.700-26.400s4.500-21.100 13.700-26.400l3-1.700zM472 384a40 40 0 1 1 80 0 40 40 0 1 1 -80 0z"/></svg>
<svg style="left:1246.00px;top:505.80px" width="8.75" height="14.00" viewBox="0 0 320 512"><path fill="#9ea2a9" fill-rule="evenodd" d="M310.600 233.400c12.500 12.500 12.500 32.800 0 45.300l-192 192c-12.500 12.500-32.800 12.500-45.300 0s-12.500-32.800 0-45.300L242.700 256 73.400 86.600c-12.500-12.500-12.500-32.800 0-45.300s32.800-12.500 45.300 0l192 192z"/></svg>
<svg style="left:936.88px;top:580.00px" width="12.25" height="14.00" viewBox="0 0 448 512"><path fill="#16162a" fill-rule="evenodd" d="M448 80v48c0 44.200-100.300 80-224 80S0 172.200 0 128V80C0 35.800 100.300 0 224 0S448 35.800 448 80zM393.200 214.700c20.800-7.400 39.900-16.900 54.800-28.600V288c0 44.200-100.300 80-224 80S0 332.200 0 288V186.100c14.900 11.800 34 21.200 54.800 28.600C99.700 230.700 159.500 240 224 240s124.300-9.300 169.200-25.300zM0 346.100c14.900 11.800 34 21.200 54.800 28.600C99.700 390.700 159.500 400 224 400s124.300-9.300 169.200-25.300c20.800-7.400 39.900-16.900 54.800-28.600V432c0 44.200-100.300 80-224 80S0 476.200 0 432V346.100z"/></svg>
<svg style="left:1246.00px;top:579.80px" width="8.75" height="14.00" viewBox="0 0 320 512"><path fill="#9ea2a9" fill-rule="evenodd" d="M310.600 233.400c12.500 12.500 12.500 32.800 0 45.300l-192 192c-12.500 12.500-32.800 12.500-45.300 0s-12.500-32.800 0-45.300L242.700 256 73.400 86.600c-12.500-12.500-12.500-32.800 0-45.300s32.800-12.500 45.300 0l192 192z"/></svg>
<svg style="left:937.75px;top:654.00px" width="10.50" height="14.00" viewBox="0 0 384 512"><path fill="#16162a" fill-rule="evenodd" d="M64 0C28.700 0 0 28.700 0 64V448c0 35.300 28.700 64 64 64H320c35.300 0 64-28.700 64-64V160H256c-17.700 0-32-14.300-32-32V0H64zM256 0V128H384L256 0zM112 256H272c8.800 0 16 7.200 16 16s-7.200 16-16 16H112c-8.800 0-16-7.200-16-16s7.200-16 16-16zm0 64H272c8.800 0 16 7.200 16 16s-7.200 16-16 16H112c-8.800 0-16-7.200-16-16s7.200-16 16-16zm0 64H272c8.800 0 16 7.200 16 16s-7.200 16-16 16H112c-8.800 0-16-7.200-16-16s7.200-16 16-16z"/></svg>
<svg style="left:1246.00px;top:653.80px" width="8.75" height="14.00" viewBox="0 0 320 512"><path fill="#9ea2a9" fill-rule="evenodd" d="M310.600 233.400c12.500 12.500 12.500 32.800 0 45.300l-192 192c-12.500 12.500-32.800 12.500-45.300 0s-12.500-32.800 0-45.300L242.700 256 73.400 86.600c-12.500-12.500-12.500-32.800 0-45.300s32.800-12.500 45.300 0l192 192z"/></svg>
<svg style="left:936.00px;top:728.00px" width="14.00" height="14.00" viewBox="0 0 512 512"><path fill="#16162a" fill-rule="evenodd" d="M495.900 166.600c3.200 8.700 .5 18.400-6.400 24.600l-43.300 39.400c1.100 8.300 1.700 16.800 1.700 25.400s-.6 17.100-1.700 25.400l43.300 39.400c6.900 6.200 9.600 15.900 6.400 24.600c-4.400 11.900-9.700 23.300-15.800 34.300l-4.700 8.100c-6.600 11-14 21.400-22.100 31.200c-5.900 7.200-15.700 9.600-24.500 6.800l-55.700-17.700c-13.400 10.300-28.200 18.900-44 25.400l-12.500 57.100c-2 9.100-9 16.300-18.200 17.800c-13.800 2.300-28 3.500-42.500 3.500s-28.700-1.200-42.500-3.500c-9.200-1.500-16.200-8.700-18.200-17.800l-12.500-57.100c-15.800-6.500-30.600-15.100-44-25.400L83.100 425.900c-8.800 2.800-18.600 .3-24.500-6.800c-8.100-9.800-15.500-20.200-22.100-31.200l-4.700-8.100c-6.100-11-11.400-22.400-15.800-34.300c-3.200-8.700-.5-18.400 6.400-24.600l43.300-39.400C64.600 273.100 64 264.600 64 256s.6-17.100 1.700-25.400L22.400 191.200c-6.900-6.200-9.600-15.900-6.400-24.600c4.400-11.900 9.700-23.300 15.800-34.300l4.700-8.100c6.600-11 14-21.400 22.100-31.200c5.900-7.200 15.700-9.600 24.500-6.800l55.700 17.700c13.400-10.300 28.200-18.900 44-25.400l12.500-57.100c2-9.100 9-16.300 18.200-17.800C227.300 1.200 241.500 0 256 0s28.700 1.200 42.500 3.500c9.200 1.500 16.200 8.700 18.200 17.800l12.500 57.100c15.800 6.500 30.600 15.100 44 25.400l55.700-17.700c8.800-2.800 18.600-.3 24.500 6.800c8.100 9.800 15.500 20.200 22.100 31.200l4.700 8.100c6.100 11 11.400 22.400 15.800 34.300zM256 336a80 80 0 1 0 0-160 80 80 0 1 0 0 160z"/></svg>
<svg style="left:1246.00px;top:727.80px" width="8.75" height="14.00" viewBox="0 0 320 512"><path fill="#9ea2a9" fill-rule="evenodd" d="M310.600 233.400c12.500 12.500 12.500 32.800 0 45.300l-192 192c-12.500 12.500-32.800 12.500-45.300 0s-12.500-32.800 0-45.300L242.700 256 73.400 86.600c-12.500-12.500-12.500-32.800 0-45.300s32.800-12.500 45.300 0l192 192z"/></svg>
<svg style="left:909.50px;top:810.90px" width="14.00" height="14.00" viewBox="0 0 512 512"><path fill="#1a8fb5" fill-rule="evenodd" d="M142.900 142.900c62.200-62.200 162.700-62.500 225.300-1L327 183c-6.900 6.900-8.900 17.200-5.200 26.200s12.500 14.800 22.200 14.800H463.500c0 0 0 0 0 0H472c13.300 0 24-10.700 24-24V72c0-9.700-5.800-18.500-14.800-22.200s-19.300-1.700-26.200 5.200L413.400 96.600c-87.600-86.500-228.700-86.200-315.800 1C73.200 122 55.600 150.700 44.800 181.400c-5.900 16.700 2.900 34.900 19.500 40.800s34.900-2.900 40.800-19.500c7.700-21.800 20.200-42.300 37.800-59.800zM16 312v7.600 .7V440c0 9.700 5.800 18.500 14.800 22.200s19.300 1.700 26.200-5.200l41.600-41.600c87.600 86.500 228.700 86.200 315.800-1c24.400-24.400 42.100-53.100 52.900-83.700c5.900-16.700-2.900-34.900-19.500-40.800s-34.900 2.900-40.800 19.500c-7.700 21.800-20.200 42.300-37.800 59.800c-62.200 62.200-162.700 62.500-225.300 1L185 329c6.900-6.900 8.900-17.200 5.200-26.200s-12.500-14.800-22.200-14.800H48.400h-.7H40c-13.300 0-24 10.700-24 24z"/></svg>
<svg style="left:1049.62px;top:886.58px" width="12.25" height="12.25" viewBox="0 0 512 512"><path fill="#ffffff" fill-rule="evenodd" d="M142.900 142.900c62.200-62.200 162.700-62.500 225.300-1L327 183c-6.900 6.900-8.900 17.200-5.200 26.200s12.500 14.800 22.200 14.800H463.500c0 0 0 0 0 0H472c13.300 0 24-10.700 24-24V72c0-9.700-5.800-18.500-14.800-22.200s-19.300-1.700-26.200 5.200L413.400 96.600c-87.600-86.500-228.700-86.200-315.800 1C73.200 122 55.600 150.700 44.800 181.400c-5.900 16.700 2.900 34.900 19.500 40.800s34.900-2.900 40.800-19.500c7.700-21.800 20.200-42.300 37.800-59.800zM16 312v7.600 .7V440c0 9.700 5.800 18.500 14.800 22.200s19.300 1.700 26.200-5.200l41.600-41.600c87.600 86.500 228.700 86.200 315.800-1c24.400-24.400 42.100-53.100 52.900-83.700c5.900-16.700-2.900-34.900-19.500-40.800s-34.900 2.900-40.800 19.500c-7.700 21.800-20.200 42.300-37.800 59.800c-62.200 62.200-162.700 62.500-225.300 1L185 329c6.900-6.900 8.900-17.200 5.200-26.200s-12.500-14.800-22.200-14.800H48.400h-.7H40c-13.300 0-24 10.700-24 24z"/></svg>
<div class="tx">
<h2 class="t" style="left:936.84px;top:406px;color:#1a1a2e;font-size:16.98px;-webkit-text-stroke:0.65px;transform:scaleX(1.0766);">Acciones Administrativas</h2>
<h3 class="t" style="left:930.65px;top:452px;color:#1a1a2e;font-size:13.51px;-webkit-text-stroke:0.55px;transform:scaleX(1.0148);">Acciones Rápidas</h3>
<strong class="t" style="left:974.28px;top:499px;color:#1a1a2e;font-size:13.51px;-webkit-text-stroke:0.55px;transform:scaleX(1.0362);">Gestionar Usuarios</strong>
<span class="t" style="left:974.70px;top:519px;color:#636b79;font-size:11.58px;-webkit-text-stroke:0.15px;transform:scaleX(1.0076);">5 usuarios</span>
<strong class="t" style="left:974.28px;top:573px;color:#1a1a2e;font-size:13.51px;-webkit-text-stroke:0.55px;transform:scaleX(1.0432);">Copias de Seguridad</strong>
<span class="t" style="left:974.70px;top:593px;color:#636b79;font-size:11.58px;-webkit-text-stroke:0.15px;transform:scaleX(1.0058);">Gestionar copias</span>
<strong class="t" style="left:975.05px;top:647px;color:#1a1a2e;font-size:13.51px;-webkit-text-stroke:0.55px;transform:scaleX(1.0160);">Ver Logs</strong>
<span class="t" style="left:975.20px;top:667px;color:#636b79;font-size:11.58px;-webkit-text-stroke:0.15px;transform:scaleX(1.0190);">Ver actividad</span>
<strong class="t" style="left:974.27px;top:721px;color:#1a1a2e;font-size:13.51px;-webkit-text-stroke:0.55px;transform:scaleX(1.0537);">Configuración del Sistema</strong>
<span class="t" style="left:974.68px;top:741px;color:#636b79;font-size:11.58px;-webkit-text-stroke:0.15px;transform:scaleX(1.0434);">Configuración</span>
<h3 class="t" style="left:931.54px;top:812px;color:#1a1a2e;font-size:13.51px;-webkit-text-stroke:0.55px;transform:scaleX(1.0506);">Sincronización</h3>
<label class="t" style="left:922.14px;top:857px;color:#374151;font-size:11.87px;-webkit-text-stroke:0.3px;transform:scaleX(1.0176);">Emails de Producción</label>
<span class="t" style="left:1067.29px;top:889px;color:#ffffff;font-size:11.82px;-webkit-text-stroke:0.35px;transform:scaleX(1.0282);">Sincronizar</span>
</div>
</aside>
</main>
</body>
</html>
